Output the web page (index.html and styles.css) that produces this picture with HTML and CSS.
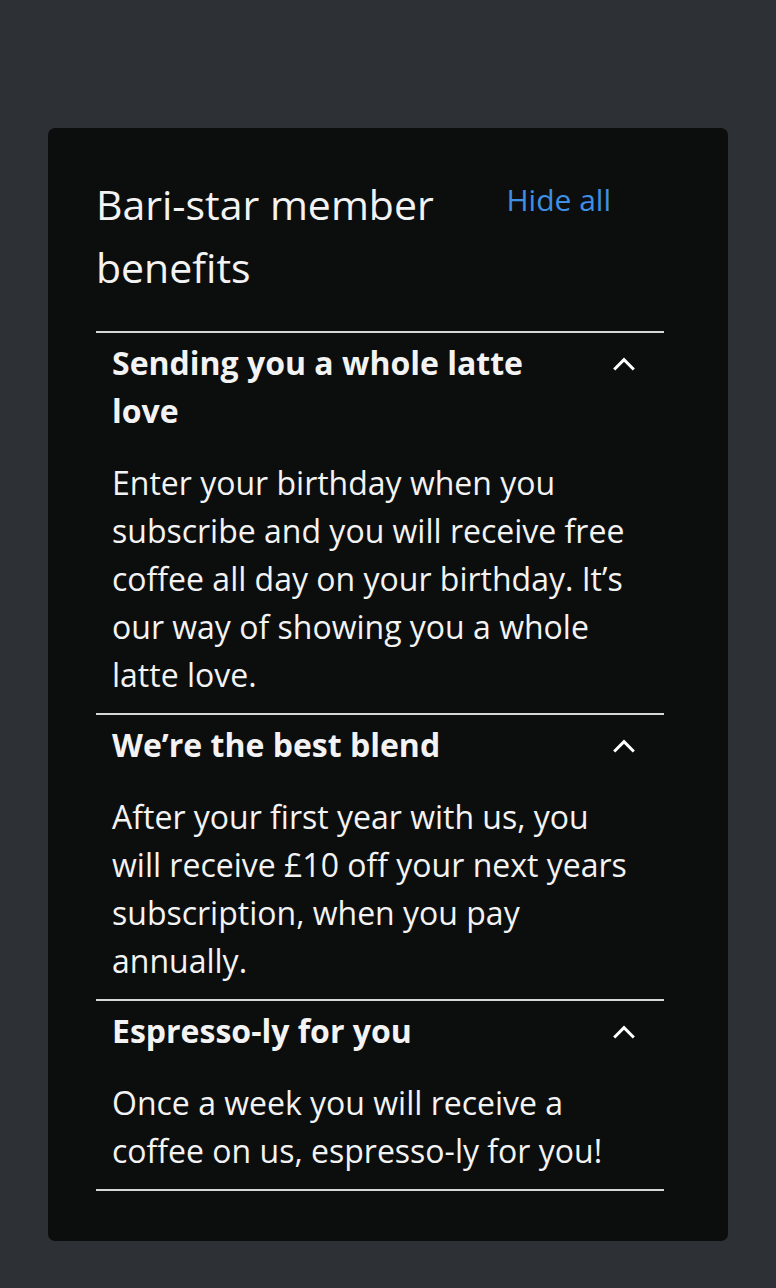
FILE: index.html
```html
<!DOCTYPE html>
<html lang="en">
<head>
<meta charset="utf-8">
<title>Bari-star member benefits</title>
<link rel="stylesheet" href="styles.css">
</head>
<body>
<main class="page">
  <section class="card">
    <header class="card-header">
      <h1 class="title">Bari-star member benefits</h1>
      <a class="hide-all" href="#">Hide all</a>
    </header>
    <div class="accordion">
      <div class="item">
        <div class="item-head">
          <h2 class="item-title">Sending you a whole latte love</h2>
          <span class="toggle"><svg class="chevron" viewBox="0 0 24 24" width="24" height="24"><path d="M2.2 18.5 L12 8.7 L21.8 18.5" fill="none" stroke="#fff" stroke-width="3"/></svg></span>
        </div>
        <p class="item-body">Enter your birthday when you subscribe and you will receive free coffee all day on your birthday. It’s our way of showing you a whole latte love.</p>
      </div>
      <div class="item">
        <div class="item-head">
          <h2 class="item-title">We’re the best blend</h2>
          <span class="toggle"><svg class="chevron" viewBox="0 0 24 24" width="24" height="24"><path d="M2.2 18.5 L12 8.7 L21.8 18.5" fill="none" stroke="#fff" stroke-width="3"/></svg></span>
        </div>
        <p class="item-body">After your first year with us, you will receive £10 off your next years subscription, when you pay annually.</p>
      </div>
      <div class="item">
        <div class="item-head">
          <h2 class="item-title">Espresso-ly for you</h2>
          <span class="toggle"><svg class="chevron" viewBox="0 0 24 24" width="24" height="24"><path d="M2.2 18.5 L12 8.7 L21.8 18.5" fill="none" stroke="#fff" stroke-width="3"/></svg></span>
        </div>
        <p class="item-body">Once a week you will receive a coffee on us, espresso-ly for you!</p>
      </div>
    </div>
  </section>
</main>
</body>
</html>
```

FILE: styles.css
```css
* { box-sizing: border-box; }
html, body {
  margin: 0;
  padding: 0;
  background: #2d3035;
  font-family: "Open Sans", "Noto Sans", sans-serif;
  color: #f3f3f3;
}
.page {
  padding: 128px 48px 48px;
}
.card {
  background: #0c0e0e;
  border-radius: 7px;
  padding: 45px 64px 50px 48px;
}
.card-header {
  display: flex;
  justify-content: space-between;
  align-items: flex-start;
  padding-bottom: 32px;
}
.title {
  margin: 0;
  max-width: 400px;
  font-size: 41px;
  font-weight: 400;
  line-height: 63px;
}
.hide-all {
  margin-top: 7px;
  margin-right: 53px;
  font-size: 30px;
  line-height: 40px;
  color: #3f8fe3;
  text-decoration: none;
}
.accordion {
  border-bottom: 2px solid #d6d6d6;
}
.item {
  border-top: 2px solid #d6d6d6;
  padding: 6px 24px 14px 16px;
}
.item-head {
  display: flex;
  align-items: flex-start;
  gap: 12px;
  margin-right: -8px;
}
.item-title {
  flex: 1;
  margin: 0;
  font-size: 32px;
  font-weight: 700;
  line-height: 48px;
}
.toggle {
  flex: none;
  width: 48px;
  height: 48px;
  display: flex;
  align-items: center;
  justify-content: center;
}
.item-body {
  margin: 24px 0 0;
  font-size: 32px;
  font-weight: 400;
  line-height: 48px;
}
```
